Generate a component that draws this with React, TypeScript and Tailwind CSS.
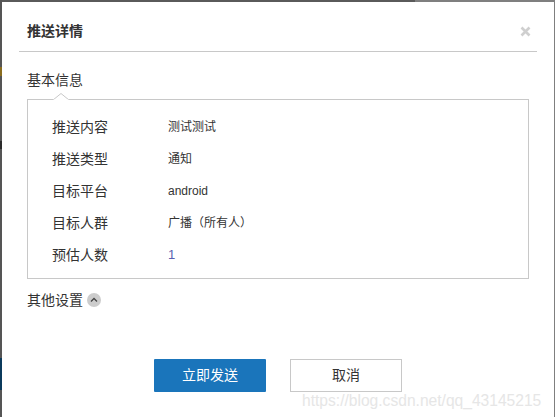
import React from "react";

const rows: [string, string, string?][] = [
  ["推送内容", "测试测试", "text-[12px] text-[#333]"],
  ["推送类型", "通知", "text-[12px] text-[#333]"],
  ["目标平台", "android", "text-[12px] text-[#333]"],
  ["目标人群", "广播（所有人）", "text-[12px] text-[#333]"],
  ["预估人数", "1", "text-[13px] text-[#5a5fb0]"],
];

export default function App() {
  return (
    <div className="w-[555px] h-[417px] overflow-hidden relative bg-[#7f7f7f] pt-[2px] pl-[2px] pr-[1px] font-['Liberation_Sans','Noto_Sans_CJK_SC',sans-serif] text-[#333]">
      <div className="absolute left-0 top-0 w-[415px] h-[2px] bg-[#5a5a5a]" />
      <div className="absolute left-0 top-0 w-[2px] h-[417px] bg-[#555]" />
      <div className="absolute left-0 top-[67px] w-[2px] h-[9px] bg-[#8a6d1f]" />
      <div className="absolute left-0 top-[141px] w-[2px] h-[8px] bg-[#2b2b2b]" />
      <div className="absolute left-0 top-[358px] w-[2px] h-[32px] bg-[#0b3a5c]" />
      <div className="bg-white h-full relative px-[25px] flex flex-col">
        <div className="h-[50px] border-b border-[#c8c8c8] -mx-[8px] pl-[8px] pr-[6px] pt-[10px] flex items-center justify-between shrink-0">
          <span className="text-[14px] font-bold text-[#333]">推送详情</span>
          <svg width="11" height="11" viewBox="0 0 11 11">
            <path d="M1.5 1.5L9.5 9.5M9.5 1.5L1.5 9.5" stroke="#cfcfcf" strokeWidth="2.6" />
          </svg>
        </div>
        <div className="text-[14px] leading-[20px] mt-[18px]">基本信息</div>
        <div className="relative mt-[9px] h-[180px] border border-[#c8c8c8] pt-[11px] pl-[24px]">
          <svg width="16" height="7" viewBox="0 0 16 7" className="absolute left-[25px] -top-[7px]">
            <path d="M0 7L8 0.5L16 7" fill="white" stroke="#c8c8c8" />
            <path d="M0.5 7.5H15.5" stroke="white" strokeWidth="2" />
          </svg>
          {rows.map(([k, v, c]) => (
            <div key={k} className="flex items-center h-[32px]">
              <span className="w-[116px] text-[14px] text-[#333]">{k}</span>
              <span className={c}>{v}</span>
            </div>
          ))}
        </div>
        <div className="flex items-center mt-[11px] h-[20px]">
          <span className="text-[14px]">其他设置</span>
          <span className="ml-[4px] w-[14px] h-[14px] rounded-full bg-[#cccccc] flex items-center justify-center">
            <svg width="8" height="6" viewBox="0 0 8 6">
              <path d="M1 4.5L4 1.5L7 4.5" fill="none" stroke="#444" strokeWidth="1.3" />
            </svg>
          </span>
        </div>
        <div className="flex mt-[49px] ml-[127px] gap-[24px]">
          <button className="w-[112px] h-[33px] bg-[#1a75bb] rounded-[1px] text-white text-[14px]">立即发送</button>
          <button className="w-[112px] h-[33px] border border-[#c8c8c8] text-[#333] text-[14px]">取消</button>
        </div>
      </div>
      <span className="absolute left-[302px] top-[389px] text-[15.6px] text-[#e6e6e6]">https://blog.csdn.net/qq_43145215</span>
    </div>
  );
}
